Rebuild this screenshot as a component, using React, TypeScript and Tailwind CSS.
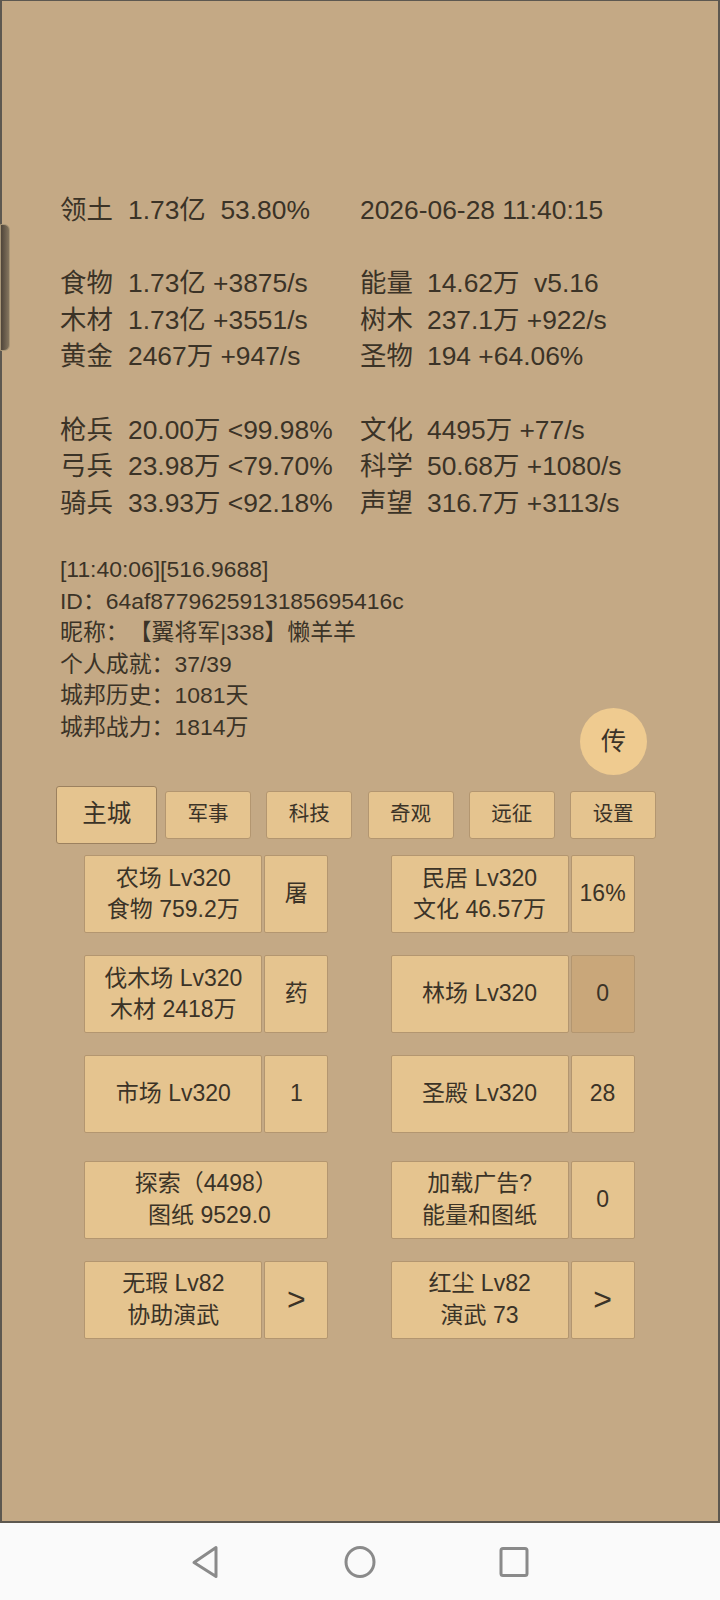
import React from "react";

type Cell = { label?: string; value: string } | null;

const statRows: ([Cell, Cell] | null)[] = [
  [{ label: "领土", value: "1.73亿  53.80%" }, { value: "2026-06-28 11:40:15" }],
  null,
  [{ label: "食物", value: "1.73亿 +3875/s" }, { label: "能量", value: "14.62万  v5.16" }],
  [{ label: "木材", value: "1.73亿 +3551/s" }, { label: "树木", value: "237.1万 +922/s" }],
  [{ label: "黄金", value: "2467万 +947/s" }, { label: "圣物", value: "194 +64.06%" }],
  null,
  [{ label: "枪兵", value: "20.00万 <99.98%" }, { label: "文化", value: "4495万 +77/s" }],
  [{ label: "弓兵", value: "23.98万 <79.70%" }, { label: "科学", value: "50.68万 +1080/s" }],
  [{ label: "骑兵", value: "33.93万 <92.18%" }, { label: "声望", value: "316.7万 +3113/s" }],
];

function StatCell({ cell, first }: { cell: Cell; first?: boolean }) {
  return (
    <div className={`flex whitespace-pre ${first ? "w-[300px] shrink-0" : ""}`}>
      {cell?.label && (
        <span className={`shrink-0 ${first ? "w-[68px]" : "w-[67px]"}`}>{cell.label}</span>
      )}
      {cell && <span>{cell.value}</span>}
    </div>
  );
}

function Btn({
  children,
  className = "",
}: {
  children: React.ReactNode;
  className?: string;
}) {
  return (
    <div
      className={`flex h-[78px] flex-col items-center justify-center whitespace-pre rounded-[2px] border border-[#b39670] text-[23px] leading-[31.7px] ${className}`}
    >
      {children}
    </div>
  );
}

function Pair({
  main,
  side,
  sideClass = "bg-[#e5c48f]",
  wide,
}: {
  main: React.ReactNode;
  side?: React.ReactNode;
  sideClass?: string;
  wide?: boolean;
}) {
  if (wide) {
    return (
      <div className="flex w-[244px]">
        <Btn className="w-[244px] bg-[#e5c48f]">{main}</Btn>
      </div>
    );
  }
  return (
    <div className="flex w-[244px] gap-[2px]">
      <Btn className="w-[178px] bg-[#e5c48f]">{main}</Btn>
      <Btn className={`w-[64px] ${sideClass}`}>{side}</Btn>
    </div>
  );
}

const tabs = ["主城", "军事", "科技", "奇观", "远征", "设置"];

export default function App() {
  return (
    <div className="flex h-[1600px] w-[720px] flex-col font-[family-name:'Liberation_Sans','Noto_Sans_CJK_SC',sans-serif] text-[#3b3327] [text-spacing-trim:space-all]">
      <div className="relative h-[1523px] border-x-2 border-t border-b-2 border-[#5d5850] bg-[#c4a985]">
        {/* side handle */}
        <div className="absolute -left-[2px] top-[223px] h-[127px] w-[10px] rounded-r-[6px] border border-[#a89677] bg-gradient-to-r from-[#4f453a] to-[#85765f]" />

        {/* floating 传 button */}
        <div className="absolute left-[578px] top-[707px] flex h-[67px] w-[67px] items-center justify-center rounded-full bg-[#efcb90] text-[25px]">
          传
        </div>

        {/* stats */}
        <div className="pl-[58px] pt-[190.6px] text-[26.4px] leading-[36.7px]">
          {statRows.map((row, i) =>
            row ? (
              <div key={i} className="flex h-[36.7px]">
                <StatCell cell={row[0]} first />
                <StatCell cell={row[1]} />
              </div>
            ) : (
              <div key={i} className="h-[36.7px]" />
            )
          )}
        </div>

        {/* info */}
        <div className="mt-[32.3px] pl-[58px] text-[22.9px] leading-[31.5px]">
          <div>[11:40:06][516.9688]</div>
          <div>ID：64af8779625913185695416c</div>
          <div>昵称：【翼将军|338】懒羊羊</div>
          <div>个人成就：37/39</div>
          <div>城邦历史：1081天</div>
          <div>城邦战力：1814万</div>
        </div>

        {/* tabs */}
        <div className="mt-[42.5px] flex h-[58px] items-center pl-[54px]">
          {tabs.map((t, i) => (
            <div key={t} className="flex w-[101.3px] justify-center">
              {i === 0 ? (
                <div className="flex h-[58px] w-[103px] items-center justify-center rounded-[3px] border border-[#9c815f] bg-[#e5c48f] text-[24.5px]">
                  {t}
                </div>
              ) : (
                <div className="flex h-[48px] w-[86px] items-center justify-center rounded-[3px] border border-[#b39670] bg-[#e5c48f] text-[20.5px]">
                  {t}
                </div>
              )}
            </div>
          ))}
        </div>

        {/* buildings */}
        <div className="mt-[11.7px] flex flex-col pl-[82.3px]">
          <div className="flex gap-[62.3px]">
            <Pair
              main={
                <>
                  <span>农场 Lv320</span>
                  <span>食物 759.2万</span>
                </>
              }
              side="屠"
            />
            <Pair
              main={
                <>
                  <span>民居 Lv320</span>
                  <span>文化 46.57万</span>
                </>
              }
              side="16%"
            />
          </div>
          <div className="mt-[22px] flex gap-[62.3px]">
            <Pair
              main={
                <>
                  <span>伐木场 Lv320</span>
                  <span>木材 2418万</span>
                </>
              }
              side="药"
            />
            <Pair main="林场 Lv320" side="0" sideClass="bg-[#c9a77a] border-[#a08461]" />
          </div>
          <div className="mt-[22px] flex gap-[62.3px]">
            <Pair main="市场 Lv320" side="1" />
            <Pair main="圣殿 Lv320" side="28" />
          </div>
          <div className="mt-[27.7px] flex gap-[62.3px]">
            <Pair
              wide
              main={
                <>
                  <span>探索（4498）</span>
                  <span> 图纸 9529.0</span>
                </>
              }
            />
            <Pair
              main={
                <>
                  <span>加载广告?</span>
                  <span>能量和图纸</span>
                </>
              }
              side="0"
            />
          </div>
          <div className="mt-[22px] flex gap-[62.3px]">
            <Pair
              main={
                <>
                  <span>无瑕 Lv82</span>
                  <span>协助演武</span>
                </>
              }
              side={<span className="text-[32px]">&gt;</span>}
            />
            <Pair
              main={
                <>
                  <span>红尘 Lv82</span>
                  <span>演武 73</span>
                </>
              }
              side={<span className="text-[32px]">&gt;</span>}
            />
          </div>
        </div>
      </div>

      {/* nav bar */}
      <div className="flex h-[77px] items-center justify-center bg-[#fafafa]">
        <div className="flex w-[154px] justify-center">
          <svg width="32" height="34" viewBox="0 0 32 34" fill="none">
            <path
              d="M26 2.5 L26 31.5 L4 17.5 Z"
              stroke="#8a8a8a"
              strokeWidth="3"
              strokeLinejoin="round"
            />
          </svg>
        </div>
        <div className="flex w-[154px] justify-center">
          <svg width="34" height="34" viewBox="0 0 34 34" fill="none">
            <ellipse cx="17" cy="17" rx="14" ry="14.5" stroke="#8a8a8a" strokeWidth="3" />
          </svg>
        </div>
        <div className="flex w-[154px] justify-center">
          <svg width="32" height="32" viewBox="0 0 32 32" fill="none">
            <rect x="3" y="2.5" width="26" height="27" rx="2" stroke="#8a8a8a" strokeWidth="3" />
          </svg>
        </div>
      </div>
    </div>
  );
}
